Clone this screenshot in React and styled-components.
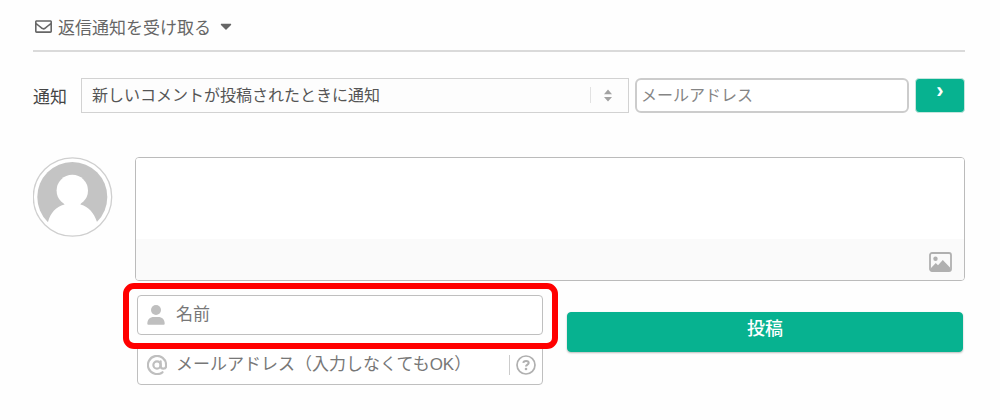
import React, { useState } from 'react'
import styled, { createGlobalStyle } from 'styled-components'
import { FaRegEnvelope, FaCaretDown } from 'react-icons/fa'
import { AtSign } from 'lucide-react'

const GlobalStyle = createGlobalStyle`
  * {
    box-sizing: border-box;
  }
  body {
    margin: 0;
    background: #fefefe;
    color: #444444;
    font-family: "Liberation Sans", "Noto Sans CJK JP", sans-serif;
    font-size: 17px;
  }
  button, input, select, textarea {
    margin: 0;
    font-family: inherit;
  }
`

const Page = styled.main`
  padding: 0 35px 24px 33px;
`
const SubscribeHead = styled.div`
  display: flex;
  height: 52px;
  padding-top: 2px;
  border-bottom: 2px solid #dadada;
`
const ToggleButton = styled.button`
  display: flex;
  align-items: center;
  gap: 6px;
  padding: 0 2px;
  border: 0;
  background: none;
  color: #666666;
  font-size: 17px;
  cursor: pointer;
`
const SubscribeForm = styled.form`
  display: grid;
  grid-template-columns: 42px 2fr 1fr 50px;
  gap: 6px;
  height: 35px;
  margin-top: 26px;
`
const SubscribeLabel = styled.label`
  align-self: center;
`
const SelectWrap = styled.div`
  position: relative;
  height: 100%;
`
const Select = styled.select`
  display: block;
  appearance: none;
  width: 100%;
  height: 100%;
  padding: 0 40px 0 10px;
  border: 1px solid #d2d2d2;
  border-radius: 0;
  background: #fdfdfd;
  color: #555555;
  font-size: 16px;
`
const SelectArrows = styled.svg`
  position: absolute;
  top: 8px;
  right: 15px;
  pointer-events: none;
`
const SubscribeInput = styled.input`
  min-width: 0;
  height: 100%;
  padding: 0 4px;
  border: 2px solid #cccccc;
  border-radius: 6px;
  background: #ffffff;
  font-size: 16px;
  &::placeholder {
    color: #858585;
  }
`
const GreenButton = styled.button`
  border: 1px solid ${(props) => (props.$outlined ? '#c5e6de' : '#07b290')};
  border-radius: 4px;
  background: #07b290;
  color: #ffffff;
  font-family: "Noto Sans CJK JP", sans-serif;
  font-size: 18px;
  font-weight: ${(props) => (props.$outlined ? 700 : 500)};
  line-height: 22px;
  cursor: pointer;
`
const SubscribeButton = styled(GreenButton)`
  height: 100%;
  padding: 0 0 10px;
  font-family: "Liberation Sans", sans-serif;
  font-size: 22px;
`
const CommentForm = styled.form`
  display: flex;
  align-items: flex-start;
  gap: 22px;
  margin-top: 44px;
`
const Avatar = styled.svg`
  flex: none;
`
const CommentBody = styled.div`
  flex: 1;
  min-width: 0;
`
const Editor = styled.div`
  border: 1px solid #bbbbbb;
  border-radius: 4px;
  background: #ffffff;
  overflow: hidden;
`
const CommentText = styled.textarea`
  display: block;
  width: 100%;
  height: 81px;
  padding: 10px;
  border: 0;
  outline: 0;
  resize: none;
  font-size: 17px;
`
const EditorBar = styled.div`
  display: flex;
  align-items: center;
  justify-content: flex-end;
  height: 41px;
  padding: 4px 12px 0;
  background: #fafafa;
`
const IconButton = styled.button`
  display: flex;
  padding: 0;
  border: 0;
  background: none;
  color: #b0b0b0;
  cursor: pointer;
`
const Foot = styled.div`
  display: grid;
  grid-template-columns: 406px 1fr;
  gap: 24px;
  padding: 14px 2px 0;
`
const Fields = styled.div`
  display: flex;
  flex-direction: column;
  gap: 10px;
`
const Field = styled.div`
  position: relative;
  display: flex;
  align-items: center;
  gap: 9px;
  height: 40px;
  padding: 0 6px 0 9px;
  border: 1px solid #bfbfbf;
  border-radius: 4px;
  background: #ffffff;
  color: #bfbfbf;
`
const FieldInput = styled.input`
  flex: 1;
  min-width: 0;
  padding: 0;
  border: 0;
  outline: 0;
  background: none;
  font-size: 17px;
  &::placeholder {
    color: #777777;
  }
`
const Highlight = styled.span`
  position: absolute;
  z-index: 1;
  inset: -13px -16px -15px -15px;
  border: 6px solid #ff0000;
  border-radius: 11px;
  pointer-events: none;
`
const HelpButton = styled(IconButton)`
  padding-left: 6px;
  border-left: 1px solid #cccccc;
`
const SubmitButton = styled(GreenButton)`
  height: 40px;
  margin-top: 17px;
  padding: 0 0 10px;
  box-shadow: 0 1px 2px #bbbbbb;
`

const ImageIcon = () => (
  <svg width="23" height="20" viewBox="0 0 23 20" aria-hidden="true">
    <rect x="1" y="1" width="21" height="18" rx="2" fill="none" stroke="currentColor" strokeWidth="1.8" />
    <circle cx="6.5" cy="6.7" r="2.2" fill="currentColor" />
    <path d="M2 16 L6.8 11 L9 13.3 L13.8 8 L21 15.5 V18.5 H2Z" fill="currentColor" />
  </svg>
)

const PersonIcon = () => (
  <svg width="20" height="20" viewBox="0 0 20 20" fill="currentColor" aria-hidden="true">
    <circle cx="9" cy="5" r="5" />
    <path d="M0.3 18.8 C0.3 14.5 2.8 12 7 12 H11 C15.2 12 17.7 14.5 17.7 18.8 Q17.7 19.8 16.7 19.8 H1.3 Q0.3 19.8 0.3 18.8Z" />
  </svg>
)

const HelpIcon = () => (
  <svg width="20" height="20" viewBox="0 0 20 20" fill="none" stroke="currentColor" aria-hidden="true">
    <circle cx="10" cy="10" r="9" strokeWidth="1.7" />
    <path d="M7.3 7.9 C7.5 5.2 12.7 5.2 12.7 7.9 C12.7 9.6 10 9.6 10 11.6" strokeWidth="2" />
    <circle cx="10" cy="14" r="1.3" fill="currentColor" stroke="none" />
  </svg>
)

const AvatarIcon = () => (
  <Avatar width="80" height="80" viewBox="0 0 80 80" role="img" aria-label="アバター">
    <defs>
      <clipPath id="avatarClip">
        <path d="M0 0 H80 V65 H0Z" />
      </clipPath>
    </defs>
    <circle cx="39.5" cy="40" r="39.2" fill="#fff" stroke="#cfcfcf" strokeWidth="1.3" />
    <g clipPath="url(#avatarClip)">
      <circle cx="39.3" cy="40" r="35" fill="#c4c4c4" />
      <circle cx="39.3" cy="33.5" r="15.7" fill="#fff" />
      <path d="M31.5 42 H47.5 V47.5 C56 50 61 56 64 65 V80 H15 V65 C17.5 56 22.5 50 31.5 47.5Z" fill="#fff" />
    </g>
  </Avatar>
)

const App = () => {
  const [open, setOpen] = useState(true)
  const stop = (e) => e.preventDefault()

  return (
    <>
      <GlobalStyle />
      <Page>
        <SubscribeHead>
          <ToggleButton type="button" aria-expanded={open} onClick={() => setOpen(!open)}>
            <FaRegEnvelope size={17} />
            返信通知を受け取る
            <FaCaretDown size={18} />
          </ToggleButton>
        </SubscribeHead>
        {open && (
          <SubscribeForm onSubmit={stop}>
            <SubscribeLabel htmlFor="notifyType">通知</SubscribeLabel>
            <SelectWrap>
              <Select id="notifyType">
                <option>新しいコメントが投稿されたときに通知</option>
              </Select>
              <SelectArrows width="24" height="18" viewBox="0 0 24 18" aria-hidden="true">
                <path d="M0.5 1V17" stroke="#e2e2e2" />
                <path d="M14 8.2 L18 3.5 L22 8.2Z M14 11 L18 15.5 L22 11Z" fill="#a2a2a2" />
              </SelectArrows>
            </SelectWrap>
            <SubscribeInput type="email" aria-label="通知先メールアドレス" placeholder="メールアドレス" />
            <SubscribeButton $outlined type="submit">›</SubscribeButton>
          </SubscribeForm>
        )}
        <CommentForm onSubmit={stop}>
          <AvatarIcon />
          <CommentBody>
            <Editor>
              <CommentText aria-label="コメント" />
              <EditorBar>
                <IconButton type="button" aria-label="画像を追加">
                  <ImageIcon />
                </IconButton>
              </EditorBar>
            </Editor>
            <Foot>
              <Fields>
                <Field>
                  <PersonIcon />
                  <FieldInput type="text" aria-label="名前" placeholder="名前" />
                  <Highlight />
                </Field>
                <Field>
                  <AtSign size={20} strokeWidth={2.4} viewBox="1 1 22 22" />
                  <FieldInput
                    type="email"
                    aria-label="メールアドレス"
                    placeholder="メールアドレス（入力しなくてもOK）"
                  />
                  <HelpButton type="button" aria-label="ヘルプ">
                    <HelpIcon />
                  </HelpButton>
                </Field>
              </Fields>
              <SubmitButton type="submit">投稿</SubmitButton>
            </Foot>
          </CommentBody>
        </CommentForm>
      </Page>
    </>
  )
}

export default App
